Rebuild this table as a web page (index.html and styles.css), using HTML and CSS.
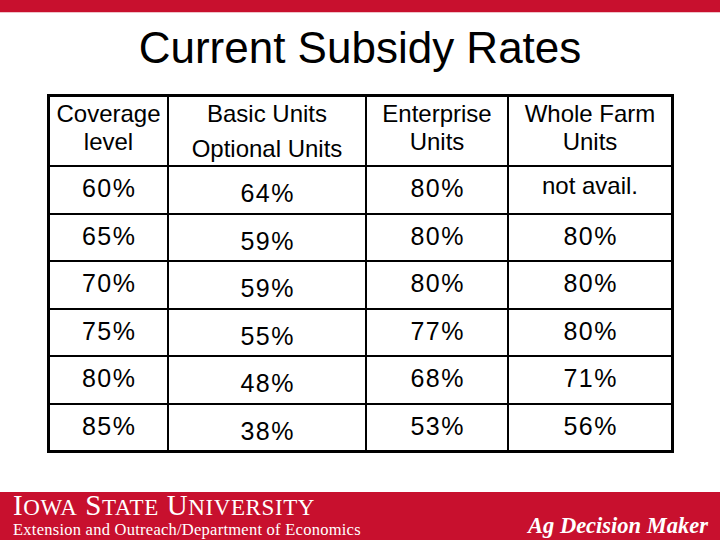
FILE: index.html
```html
<!DOCTYPE html>
<html lang="en">
<head>
<meta charset="utf-8">
<title>Current Subsidy Rates</title>
<link rel="stylesheet" href="styles.css">
</head>
<body>
<div class="slide">
  <div class="topbar"></div>
  <h1 class="title">Current Subsidy Rates</h1>
  <div class="rates">
    <div class="cell head"><div>Coverage</div><div>level</div></div>
    <div class="cell head"><div>Basic Units</div><div class="second">Optional Units</div></div>
    <div class="cell head"><div>Enterprise</div><div>Units</div></div>
    <div class="cell head"><div>Whole Farm</div><div>Units</div></div>

    <div class="cell num">60%</div>
    <div class="cell num low">64%</div>
    <div class="cell num">80%</div>
    <div class="cell num na">not avail.</div>

    <div class="cell num">65%</div>
    <div class="cell num low">59%</div>
    <div class="cell num">80%</div>
    <div class="cell num">80%</div>

    <div class="cell num">70%</div>
    <div class="cell num low">59%</div>
    <div class="cell num">80%</div>
    <div class="cell num">80%</div>

    <div class="cell num">75%</div>
    <div class="cell num low">55%</div>
    <div class="cell num">77%</div>
    <div class="cell num">80%</div>

    <div class="cell num">80%</div>
    <div class="cell num low">48%</div>
    <div class="cell num">68%</div>
    <div class="cell num">71%</div>

    <div class="cell num">85%</div>
    <div class="cell num low">38%</div>
    <div class="cell num">53%</div>
    <div class="cell num">56%</div>
  </div>
  <footer class="footer">
    <div class="isu">
      <div class="wordmark">I<span class="sc">OWA</span> S<span class="sc">TATE</span> U<span class="sc">NIVERSITY</span></div>
      <div class="dept">Extension and Outreach/Department of Economics</div>
    </div>
    <div class="adm">Ag Decision Maker</div>
  </footer>
</div>
</body>
</html>
```
FILE: styles.css
```css
html, body {
  margin: 0;
  padding: 0;
  background: #fff;
}

.slide {
  width: 720px;
  height: 540px;
  display: flex;
  flex-direction: column;
  overflow: hidden;
  font-family: "Liberation Sans", Arial, sans-serif;
  color: #000;
}

.topbar {
  height: 12px;
  background: #c8102e;
  border-bottom: 1px solid #efc3c9;
  flex: none;
}

.title {
  margin: 13px 0 0;
  font-weight: normal;
  font-size: 44px;
  line-height: 44px;
  text-align: center;
  letter-spacing: 0;
}

.rates {
  margin: 24px 0 0 47px;
  width: 627px;
  height: 359px;
  box-sizing: border-box;
  border: 3px solid #000;
  background: #000;
  display: grid;
  grid-template-columns: 117px 196px 140px 162px;
  grid-template-rows: 68px repeat(6, 1fr);
  gap: 2px;
}

.cell {
  background: #fff;
  text-align: center;
  font-size: 24px;
}

.head {
  padding-top: 3px;
  line-height: 28px;
}

.head .second {
  margin-top: 7px;
}

.num {
  font-size: 25px;
  line-height: 24px;
  padding-top: 9px;
  padding-left: 1.5px;
  letter-spacing: 1.5px;
}

.num.low {
  padding-top: 14px;
}

.num.na {
  font-size: 24px;
  padding-top: 7px;
  padding-left: 0;
  letter-spacing: 0;
}

.footer {
  margin-top: auto;
  height: 48px;
  background: #c8102e;
  color: #fff;
  display: flex;
  justify-content: space-between;
  align-items: flex-start;
  font-family: "Liberation Serif", "Times New Roman", serif;
}

.isu {
  padding-left: 13px;
}

.wordmark {
  font-size: 29px;
  line-height: 29px;
  margin-top: -1px;
  letter-spacing: 0.6px;
}

.wordmark .sc {
  font-size: 23px;
}

.dept {
  font-size: 16.5px;
  line-height: 18px;
  letter-spacing: 0.25px;
  margin-top: -1px;
}

.adm {
  font-weight: bold;
  font-style: italic;
  font-size: 22.5px;
  line-height: 24px;
  margin-top: 22px;
  padding-right: 12px;
}
```
